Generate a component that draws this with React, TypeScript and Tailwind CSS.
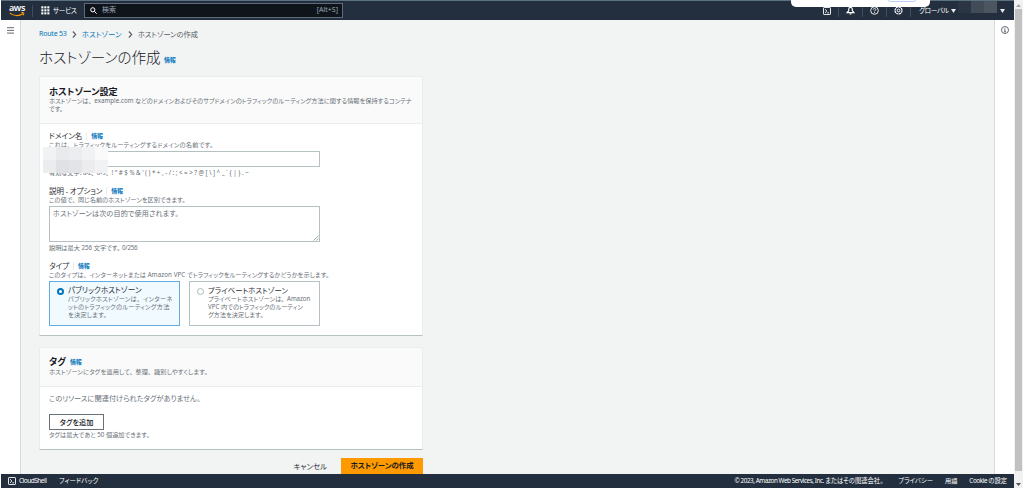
import React from 'react';

interface TextProps {
  className?: string;
  children?: React.ReactNode;
}

const Info: React.FC<TextProps> = ({ className = '' }) => (
  <a className={`text-[6px] font-bold tracking-[-0.2px] text-[#0073bb] ${className}`}>情報</a>
);

const Caret: React.FC = () => (
  <svg width="5" height="4" viewBox="0 0 5 4" fill="#e9ebed"><path d="M0 0h5L2.5 4z" /></svg>
);

const Chevron: React.FC = () => (
  <svg width="5" height="7" viewBox="0 0 5 7" fill="none" stroke="#545b64" strokeWidth="1.1"><path d="M.9.5 3.7 3.5.9 6.5" /></svg>
);

const AwsLogo: React.FC = () => (
  <div className="flex w-4 flex-col items-center">
    <span className="h-[7px] text-[9px] font-semibold leading-[6px] tracking-[-0.4px] text-white">aws</span>
    <svg width="16" height="5" viewBox="0 0 16 5" fill="none" stroke="#ff9900" strokeWidth="1.1">
      <path d="M.7.8C4.5 4.3 10 4.4 14 1.7" />
      <path d="M12.2.8c2.6-.5 3.2 0 1.9 2.5" />
    </svg>
  </div>
);

const ShellIcon: React.FC = () => (
  <svg width="8" height="8" viewBox="0 0 8 8" fill="none" stroke="#fff" strokeWidth="0.9">
    <rect x=".5" y=".5" width="7" height="7" rx=".6" />
    <path d="M2 2.2 3.9 4 2 5.8M4.3 5.8h1.8" />
  </svg>
);

const TopBar: React.FC = () => (
  <header className="relative flex h-5 items-center whitespace-nowrap border-t border-[#5c7180] bg-[#232f3e] text-[7px] text-white">
    <div className="ml-2"><AwsLogo /></div>
    <div className="ml-[7px] h-3 w-px bg-[#414d5c]" />
    <svg className="ml-2" width="9" height="9" viewBox="0 0 9 9" fill="#fff">
      {[0, 3, 6].map(y => [0, 3, 6].map(x => <rect key={`${x}${y}`} x={x + 0.3} y={y + 0.3} width="2.1" height="2.1" />))}
    </svg>
    <span className="ml-[3px] w-[31px] text-[6.6px] tracking-[-0.3px]">サービス</span>
    <div className="flex h-[15px] w-[259px] items-center border border-[#5f6b7a] bg-[#0f141b] text-[#9ba7b6]">
      <svg className="ml-[5px]" width="7" height="7" viewBox="0 0 7 7" fill="none" stroke="#fff"><circle cx="2.8" cy="2.8" r="2.1" /><path d="m4.4 4.4 2.2 2.2" /></svg>
      <span className="ml-[5px] text-[7px]">検索</span>
      <span className="ml-auto mr-1 text-[7px]">[Alt+S]</span>
    </div>
    <div className="ml-auto flex h-full items-center">
      <ShellIcon />
      <div className="mx-[7px] h-3 w-px bg-[#414d5c]" />
      <svg width="9" height="9" viewBox="0 0 9 9" fill="none" stroke="#fff" strokeWidth="1.1"><path d="M1 6.6h7L6.3 4.7V3.2a1.8 1.8 0 0 0-3.6 0v1.5zM3.6 8h1.8M4.5.6v1" /></svg>
      <div className="mx-[7px] h-3 w-px bg-[#414d5c]" />
      <svg width="9" height="9" viewBox="0 0 9 9" fill="none" stroke="#fff" strokeWidth=".9"><circle cx="4.5" cy="4.5" r="3.8" /><path d="M3.2 3.7c0-1.6 2.6-1.6 2.6-.1 0 .9-1.3.8-1.3 1.8M4.5 6v.9" /></svg>
      <div className="mx-[7px] h-3 w-px bg-[#414d5c]" />
      <svg width="9" height="9" viewBox="0 0 9 9" fill="none" stroke="#fff"><circle cx="4.5" cy="4.5" r="3.5" strokeWidth="1.2" strokeDasharray="2.2 .5" /><circle cx="4.5" cy="4.5" r="1.4" /></svg>
      <div className="ml-[7px] mr-2 h-3 w-px bg-[#414d5c]" />
      <span className="w-8 text-[6.6px] tracking-[-0.3px]">グローバル</span>
      <Caret />
      <div className="ml-[2px] flex h-3 w-[39px] self-start">
        <div className="w-[13px] bg-[#2a3644]" />
        <div className="w-[13px] bg-[#414c58]" />
        <div className="w-[13px] bg-[#4b5660]" />
      </div>
      <div className="ml-[3px] mr-[9px]"><Caret /></div>
    </div>
    <div className="absolute -top-px right-[84px] flex h-[7px] w-[139px] justify-end overflow-hidden rounded-b-[5px] bg-white pr-3">
      <div className="-mt-2 h-[10px] w-8 rounded-full border border-[#b9cff8]" />
    </div>
  </header>
);

const CardHeader: React.FC<TextProps> = ({ className = '', children }) => (
  <div className={`border-b border-[#eaeded] bg-[#fafafa] px-[9px] ${className}`}>{children}</div>
);

// proportional kana also tightens the comma, so give it its space back
const spaceCommas = (node: React.ReactNode): React.ReactNode =>
  React.Children.map(node, child =>
    typeof child === 'string'
      ? child.split(/([、])/).map((part, i) => (part === '、' ? <span key={i} className="mr-[2.6px]">、</span> : part))
      : child
  );

const Hint: React.FC<TextProps> = ({ className = '', children }) => (
  <p className={`whitespace-nowrap text-[6.2px] leading-[8px] text-[#687078] ${className}`}>{spaceCommas(children)}</p>
);

const Label: React.FC<TextProps> = ({ className = '', children }) => (
  <div className={`flex h-[10px] items-center whitespace-nowrap text-[7.5px] leading-[10px] text-[#2a2e33] ${className}`}>
    {children}
    <div className="mx-1 h-2 w-px bg-[#eaeded]" />
    <Info />
  </div>
);

const App: React.FC = () => (
  <div className="flex h-[488px] w-[1023px] overflow-hidden bg-white text-[#16191f] [font-family:'Noto_Sans','Noto_Sans_CJK_JP',sans-serif] [font-feature-settings:'palt']">
    <div className="ml-px flex w-[1013px] shrink-0 flex-col">
      <TopBar />
      <div className="flex h-[454px]">
        <aside className="w-5 shrink-0 border-r border-[#d5dbdb] bg-white pl-[6px] pt-[7px]">
          <svg width="7" height="7" viewBox="0 0 7 7" stroke="#545b64" strokeWidth=".9"><path d="M0 .7h7M0 3.4h7M0 6.1h7" /></svg>
        </aside>
        <main className="flex-1 overflow-hidden bg-[#f2f3f3] pl-[18px]">
          <nav className="mt-[9px] flex h-[10px] items-center whitespace-nowrap text-[7.2px] leading-[10px] text-[#545b64]">
            <a className="w-7 text-[7px] tracking-[-0.2px] text-[#0073bb]">Route 53</a>
            <span className="ml-[5px]"><Chevron /></span>
            <a className="ml-[5px] w-[41px] tracking-[0.2px] text-[#0073bb]">ホストゾーン</a>
            <span className="ml-[5px]"><Chevron /></span>
            <span className="ml-[5px]">ホストゾーンの作成</span>
          </nav>
          <h1 className="mt-[8px] flex h-5 items-center whitespace-nowrap text-[14.6px] font-light leading-5">
            <span className="w-[125px]">ホストゾーンの作成</span>
            <Info className="mt-[5px]" />
          </h1>

          <section className="mt-[9px] h-[260px] w-[384px] border border-[#eaeded] border-b-[#b5c0c1] bg-white">
            <CardHeader className="h-[47px] pt-[9px]">
              <h2 className="h-[11px] whitespace-nowrap text-[9.1px] font-bold leading-[11px]">ホストゾーン設定</h2>
              <Hint className="tracking-[0.02px]">ホストゾーンは、example.com などのドメインおよびそのサブドメインのトラフィックのルーティング方法に関する情報を保持するコンテナ</Hint>
              <Hint>です。</Hint>
            </CardHeader>
            <div className="px-[9px] pt-[7px]">
              <Label>ドメイン名</Label>
              <Hint className="tracking-[0.25px]">これは、トラフィックをルーティングするドメインの名前です。</Hint>
              <div className="relative mt-[2px]">
                <div className="h-4 w-[271px] border border-[#b4c0c1] bg-white" />
                <Hint className="mt-[2px] tracking-[-0.03px]">有効な文字: a-z、0-9、! &quot; # $ % &amp; &#39; ( ) * + , - / : ; &lt; = &gt; ? @ [ \ ] ^ _ ` {'{ | }'} . ~</Hint>
                <div className="absolute -left-[6px] -top-1 grid h-[26px] w-[65px] grid-cols-5">
                  <div className="bg-[#f1f2f4]" /><div className="bg-[#e9eaec]" /><div className="bg-[#ecedf0]" /><div className="bg-[#f1f2f3]" /><div className="bg-[#fafafa]" />
                  <div className="bg-[#ebecee]" /><div className="bg-[#e0e1e4]" /><div className="bg-[#e3e4e7]" /><div className="bg-[#ececee]" /><div className="bg-[#f1f2f3]" />
                </div>
              </div>
              <Label className="mt-[9px] tracking-[-0.1px]">説明 - オプション</Label>
              <Hint className="tracking-[0.06px]">この値で、同じ名前のホストゾーンを区別できます。</Hint>
              <div className="relative mt-[2px] h-9 w-[271px] border border-[#b4c0c1] bg-white pl-[3px] pt-[2px] text-[7.1px] leading-[9px] tracking-[0.14px] text-[#687078]">
                ホストゾーンは次の目的で使用されます。
                <svg className="absolute bottom-0 right-0" width="6" height="6" viewBox="0 0 6 6" stroke="#879596" strokeWidth=".8"><path d="M.5 5.5l5-5M3.3 5.5l2.2-2.2" /></svg>
              </div>
              <Hint className="mt-[2px]">説明は最大 256 文字です。<span className="ml-[2px] tracking-[-0.2px]">0/256</span></Hint>
              <Label className="mt-[9px]">タイプ</Label>
              <Hint className="tracking-[0.09px]">このタイプは、インターネットまたは Amazon VPC でトラフィックをルーティングするかどうかを示します。</Hint>
              <div className="mt-[2px] flex gap-[9px]">
                <div className="flex h-[45px] w-[131px] border border-[#63ace0] bg-[#f1faff] pl-[7px] pt-1">
                  <div className="mt-[2px] h-[7px] w-[7px] rounded-full border-2 border-[#0073bb] bg-white" />
                  <div className="ml-1">
                    <p className="h-[9px] whitespace-nowrap text-[7.6px] leading-[9px] text-[#2a2e33]">パブリックホストゾーン</p>
                    <Hint className="tracking-[0.24px]">パブリックホストゾーンは、インターネ<br />ットのトラフィックのルーティング方法<br />を決定します。</Hint>
                  </div>
                </div>
                <div className="flex h-[45px] w-[131px] border border-[#b4c0c1] bg-white pl-[7px] pt-1">
                  <div className="mt-[2px] h-[7px] w-[7px] rounded-full border border-[#aab7b8] bg-white" />
                  <div className="ml-1">
                    <p className="h-[9px] whitespace-nowrap text-[7.4px] leading-[9px] text-[#2a2e33]">プライベートホストゾーン</p>
                    <Hint className="tracking-[0.02px]">プライベートホストゾーンは、<span className="tracking-[-0.1px]">Amazon</span><br />VPC 内でのトラフィックのルーティン<br />グ方法を決定します。</Hint>
                  </div>
                </div>
              </div>
            </div>
          </section>

          <section className="mt-[11px] h-[103px] w-[384px] border border-[#eaeded] border-b-[#b5c0c1] bg-white">
            <CardHeader className="h-[39px] pt-2">
              <h2 className="flex h-[11px] items-center text-[9px] font-bold leading-[11px]">
                <span className="w-[21px]">タグ</span>
                <Info className="mt-[2px]" />
              </h2>
              <Hint className="mt-px tracking-[0.14px]">ホストゾーンにタグを適用して、整理、識別しやすくします。</Hint>
            </CardHeader>
            <div className="px-[9px] pt-[6px]">
              <p className="h-[10px] whitespace-nowrap text-[7.2px] leading-[10px] tracking-[0.05px] text-[#687078]">このリソースに関連付けられたタグがありません。</p>
              <button className="mt-[11px] flex h-4 w-[55px] items-center justify-center border border-[#687078] bg-white text-[7.2px] font-medium leading-[14px]">タグを追加</button>
              <Hint className="mt-px">タグは最大であと 50 個追加できます。</Hint>
            </div>
          </section>

          <div className="mt-2 flex w-[384px] items-center justify-end text-[7.4px] leading-[14px]">
            <button className="mr-[14px] text-[#2a2e33]">キャンセル</button>
            <button className="h-4 w-[82px] bg-[#ff9900] pb-[2px] font-semibold">ホストゾーンの作成</button>
          </div>
        </main>
        <aside className="w-5 shrink-0 border-l border-[#d5dbdb] bg-white pl-[6px] pt-[6px]">
          <svg width="8" height="8" viewBox="0 0 8 8" fill="none" stroke="#545b64" strokeWidth=".9"><circle cx="4" cy="4" r="3.5" /><path d="M4 1.8v.9M3.2 3.7H4v2M3 5.8h2" /></svg>
        </aside>
      </div>
      <footer className="flex h-[14px] items-center whitespace-nowrap bg-[#232f3e] pl-[7px] pr-[7px] text-[6.5px] text-white">
        <ShellIcon />
        <span className="ml-[3px] w-[40px] tracking-[-0.5px]">CloudShell</span>
        <span className="tracking-[0.1px]">フィードバック</span>
        <span className="ml-auto text-[6.3px]"><span className="tracking-[-0.42px]">© 2023, Amazon Web Services, Inc. </span>またはその関連会社。</span>
        <span className="ml-[15px] text-[6.3px]">プライバシー</span>
        <span className="ml-3 text-[6.2px]">用語</span>
        <span className="ml-3 text-[6.3px]"><span className="tracking-[-0.4px]">Cookie </span>の設定</span>
      </footer>
    </div>
    <div className="flex w-[9px] shrink-0 flex-col items-center bg-[#f1f1f1] pt-1">
      <svg width="5" height="3" viewBox="0 0 5 3" fill="#a3a3a3"><path d="M0 3h5L2.5 0z" /></svg>
      <div className="mt-[2px] h-[462px] w-[7px] bg-[#c1c1c1]" />
      <svg className="mt-3" width="5" height="3" viewBox="0 0 5 3" fill="#505050"><path d="M0 0h5L2.5 3z" /></svg>
    </div>
  </div>
);

export default App;
